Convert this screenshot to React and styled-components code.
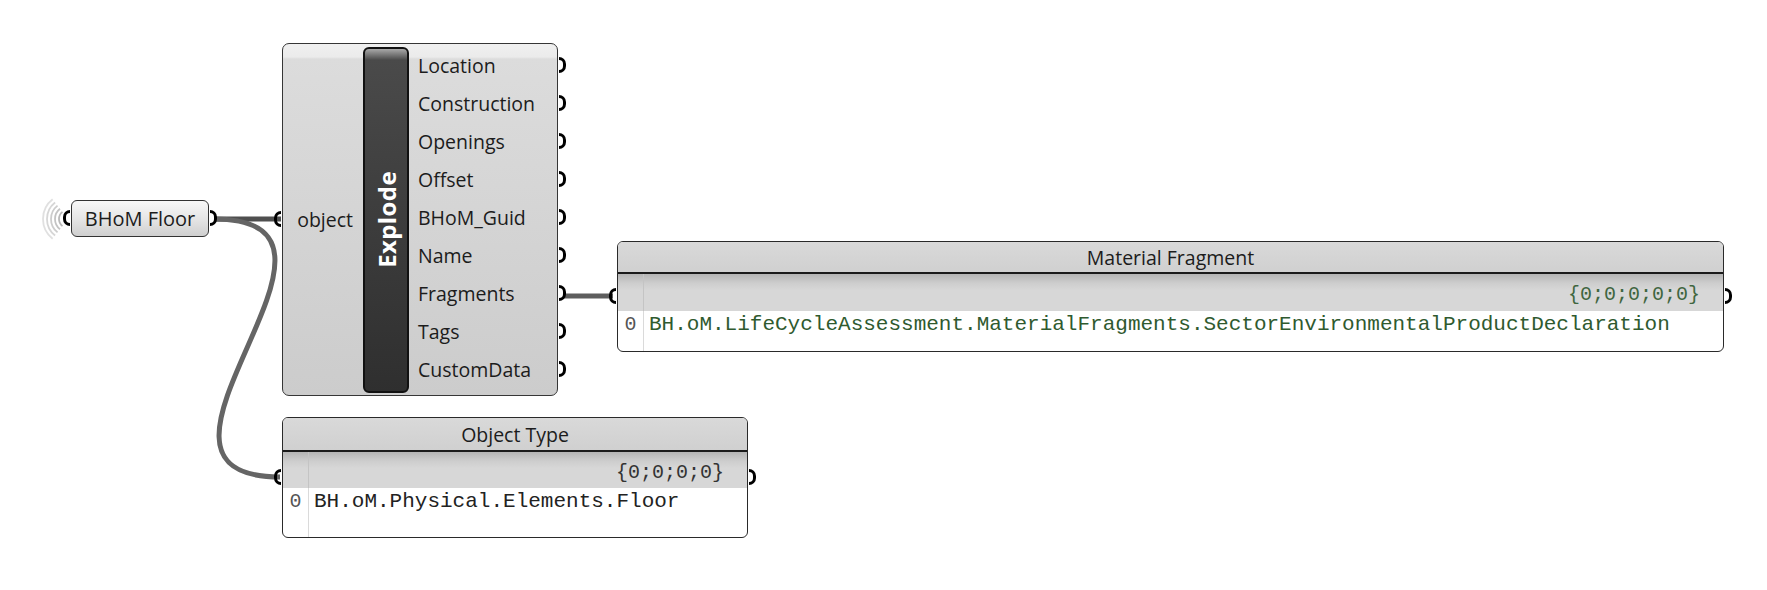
import React from 'react'
import styled, { createGlobalStyle } from 'styled-components'

const GlobalStyle = createGlobalStyle`
  body {
    margin: 0;
    background: #ffffff;
  }
`

const outputs = ['Location', 'Construction', 'Openings', 'Offset', 'BHoM_Guid', 'Name', 'Fragments', 'Tags', 'CustomData']

function Grip({ side }) {
  return <GripMark $side={side} />
}

function Panel({ x, y, w, title, titleH, headH, rowH, tree, value, color }) {
  return (
    <PanelBox $x={x} $y={y} $w={w}>
      <PanelTitle $h={titleH}>{title}</PanelTitle>
      <PanelHead $h={headH}>
        <IndexCell />
        <HeadValue $color={color}>{tree}</HeadValue>
      </PanelHead>
      <PanelRow $h={rowH}>
        <IndexCell $light>0</IndexCell>
        <RowValue $color={color}>{value}</RowValue>
      </PanelRow>
      <Grip side="left" />
      <Grip side="right" />
    </PanelBox>
  )
}

function App() {
  return (
    <>
      <GlobalStyle />
      <Canvas>
        <Wires width="1767" height="590">
          <g fill="none" strokeWidth="1.8">
            {[9, 13, 17, 21, 25].map((r, i) => {
              const a = (Math.PI * 128) / 180
              const cx = 68
              const cy = 219
              const x1 = cx + r * Math.cos(a)
              const y1 = cy - r * Math.sin(a)
              const y2 = cy + r * Math.sin(a)
              return (
                <path
                  key={r}
                  d={`M ${x1} ${y1} A ${r} ${r} 0 0 0 ${x1} ${y2}`}
                  stroke="#b9b9b9"
                  opacity={1 - i * 0.14}
                />
              )
            })}
          </g>
          <g fill="none" strokeWidth="5">
            <path d="M 214 219 L 281 219" stroke="#4f4f4f" />
            <path d="M 214 219 C 394 219, 100 477, 280 477" stroke="#656565" />
            <path d="M 563 296 L 613 296" stroke="#5e5e5e" />
          </g>
        </Wires>

        <Param $x={71} $y={200}>
          BHoM Floor
          <Grip side="left" />
          <Grip side="right" />
        </Param>

        <Component $x={282} $y={43}>
          <InputCol>
            object
            <Grip side="left" />
          </InputCol>
          <Bar>
            <BarLabel>Explode</BarLabel>
          </Bar>
          <OutputCol>
            {outputs.map(name => (
              <OutputRow key={name}>
                {name}
                <Grip side="right" />
              </OutputRow>
            ))}
          </OutputCol>
        </Component>

        <Panel
          x={617}
          y={241}
          w={1107}
          title="Material Fragment"
          titleH={32}
          headH={37}
          rowH={40}
          tree="{0;0;0;0;0}"
          value="BH.oM.LifeCycleAssessment.MaterialFragments.SectorEnvironmentalProductDeclaration"
          color="#2f5a2f"
        />

        <Panel
          x={282}
          y={417}
          w={466}
          title="Object Type"
          titleH={34}
          headH={36}
          rowH={49}
          tree="{0;0;0;0}"
          value="BH.oM.Physical.Elements.Floor"
          color="#222222"
        />
      </Canvas>
    </>
  )
}

const Canvas = styled.div`
  position: relative;
  width: 1767px;
  height: 590px;
  overflow: hidden;
  background: #ffffff;
  font-family: "Open Sans", "Noto Sans", sans-serif;
  font-size: 19.5px;
  color: #1c1c1c;
`

const Wires = styled.svg`
  position: absolute;
  left: 0;
  top: 0;
`

const GripMark = styled.span`
  position: absolute;
  top: 50%;
  margin-top: -8.5px;
  width: 4px;
  height: 10px;
  border: 3.5px solid #000;
  background: transparent;
  ${p => p.$side === 'left'
    ? 'left: -9px; border-right: none; border-radius: 9px 0 0 9px;'
    : 'right: -9px; border-left: none; border-radius: 0 9px 9px 0;'}
`

const Param = styled.div`
  position: absolute;
  left: ${p => p.$x}px;
  top: ${p => p.$y}px;
  box-sizing: border-box;
  width: 138px;
  height: 37px;
  display: flex;
  align-items: center;
  justify-content: center;
  font-size: 20px;
  border: 1.5px solid #333;
  border-radius: 6px;
  background: linear-gradient(to bottom, #f8f8f8 0%, #e6e6e6 50%, #cfcfcf 100%);
`

const Component = styled.div`
  position: absolute;
  left: ${p => p.$x}px;
  top: ${p => p.$y}px;
  box-sizing: border-box;
  width: 276px;
  height: 353px;
  display: flex;
  padding: 2.5px 0;
  border: 1.5px solid #363636;
  border-radius: 7px;
  background: linear-gradient(to bottom, #f0f0f0 0px, #ebebeb 13px, #dcdcdc 15px, #cccccc 100%);
`

const InputCol = styled.div`
  position: relative;
  width: 80px;
  box-sizing: border-box;
  display: flex;
  align-items: center;
  justify-content: flex-end;
  padding-right: 10px;
`

const Bar = styled.div`
  width: 46px;
  box-sizing: border-box;
  display: flex;
  align-items: center;
  justify-content: center;
  border: 2px solid #111;
  border-radius: 6px;
  background: linear-gradient(to bottom, #a9a9a9 0px, #4a4a4a 11px, #3e3e3e 45%, #2f2f2f 100%);
`

const BarLabel = styled.span`
  writing-mode: vertical-rl;
  transform: rotate(180deg);
  color: #ffffff;
  font-weight: 700;
  font-size: 24px;
  letter-spacing: 0.4px;
`

const OutputCol = styled.div`
  flex: 1;
  display: flex;
  flex-direction: column;
  padding-left: 9px;
`

const OutputRow = styled.div`
  position: relative;
  height: 38px;
  line-height: 38px;
  white-space: nowrap;
`

const PanelBox = styled.div`
  position: absolute;
  left: ${p => p.$x}px;
  top: ${p => p.$y}px;
  width: ${p => p.$w}px;
  box-sizing: border-box;
  display: flex;
  flex-direction: column;
  border: 1.5px solid #2a2a2a;
  border-radius: 6px;
  background: #ffffff;
`

const PanelTitle = styled.div`
  height: ${p => p.$h}px;
  box-sizing: border-box;
  display: flex;
  align-items: center;
  justify-content: center;
  border-bottom: 2px solid #1a1a1a;
  border-radius: 5px 5px 0 0;
  background: linear-gradient(to bottom, #d9d9d9 0%, #d0d0d0 100%);
`

const PanelHead = styled.div`
  height: ${p => p.$h}px;
  display: grid;
  grid-template-columns: 26px 1fr;
  background: linear-gradient(to bottom, #b4b4b4 0px, #cdcdcd 9px, #d7d7d7 16px, #d7d7d7 100%);
`

const IndexCell = styled.div`
  border-right: 1px solid ${p => (p.$light ? '#dadada' : '#c4c4c4')};
  font-family: "Liberation Mono", "DejaVu Sans Mono", monospace;
  font-size: 20px;
  color: #555;
  text-align: center;
  line-height: 28px;
`

const HeadValue = styled.div`
  display: flex;
  align-items: center;
  justify-content: flex-end;
  padding-right: 23px;
  padding-top: 4px;
  font-family: "Liberation Mono", "DejaVu Sans Mono", monospace;
  font-size: 20px;
  color: ${p => p.$color};
  opacity: 0.9;
`

const PanelRow = styled.div`
  height: ${p => p.$h}px;
  display: grid;
  grid-template-columns: 26px 1fr;
  border-radius: 0 0 5px 5px;
`

const RowValue = styled.div`
  padding-left: 5px;
  line-height: 28px;
  font-family: "Liberation Mono", "DejaVu Sans Mono", monospace;
  font-size: 21px;
  color: ${p => p.$color};
  white-space: nowrap;
`

export default App
